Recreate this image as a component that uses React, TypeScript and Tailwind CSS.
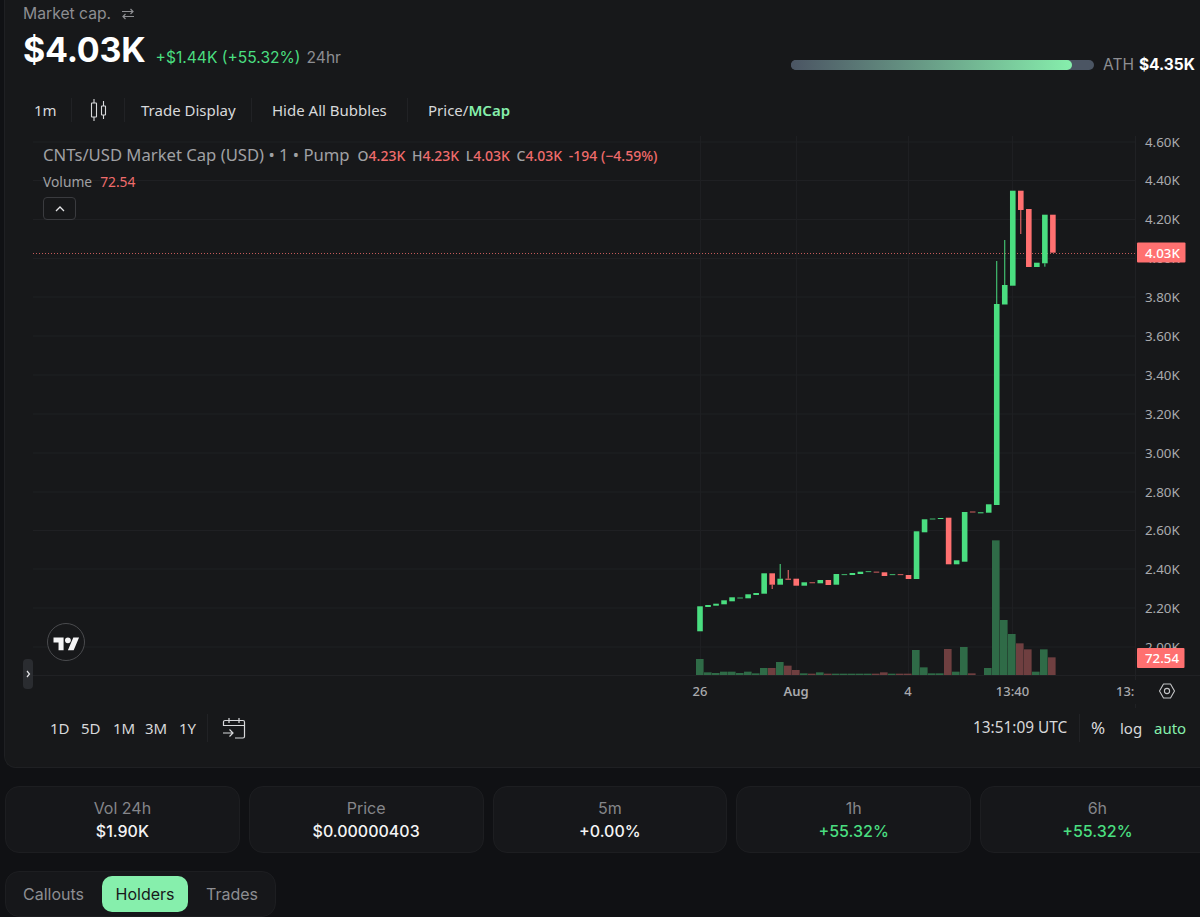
const G = "#4ade80";
const R = "#ff7070";
const VG = "#2f6b47";
const VR = "#6f3f40";

// [body top, body bottom, wick top, wick bottom, green?]
const candles: [number, number, number | null, number | null, boolean][] = [
  [606.3, 631.3, null, null, true], [605, 607, null, null, true], [603.7, 605.7, null, null, true], [600.3, 604.3, null, null, true],
  [597.3, 601.3, null, null, true], [597.6, 598.4, null, null, true], [594.3, 598.3, null, null, true], [593, 595, null, null, true],
  [573.3, 593.7, null, null, true], [573.3, 584.7, null, 589, false], [578.7, 584.7, 564, null, true], [578.7, 579.7, 570, null, false],
  [578.7, 585.7, null, null, false], [582.3, 585.7, null, null, true], [582.4, 583.2, null, null, false], [580, 583.3, null, null, true],
  [580, 585, null, null, false], [574, 584.7, null, null, true], [574.3, 575, null, null, true], [573, 575, null, null, true],
  [571.7, 574, null, null, true], [571.3, 572, null, null, true], [571.7, 572.3, null, null, false], [572.3, 576, null, null, false],
  [574.3, 575, null, null, true], [574.3, 575, null, null, false], [575, 579, null, null, false], [531.3, 579, null, null, true],
  [519.3, 532.3, null, null, true], [518.6, 519.4, null, null, true], [518, 519, null, null, true], [517.7, 564.3, null, null, false],
  [560.3, 564.3, null, null, true], [512, 561.7, null, null, true], [511.6, 512.3, null, null, false], [512.3, 513.3, null, null, true],
  [504.3, 512.7, null, null, true], [304, 505, 261, null, true], [285, 304.5, 240, null, true], [190.7, 285.7, null, null, true],
  [190.7, 210, null, 234, false], [209, 267, null, null, false], [262.7, 267, null, null, true], [214.7, 263.3, null, 266.7, true],
  [214.7, 252.7, null, null, false],
];

const volumes = [507, 547, 549, 545, 545, 549, 545, 550, 534, 534, 516, 527, 540, 550, 551, 547, 551, 551, 551, 551, 551, 551, 551, 547, 551, 551, 551, 480, 532, 550, 550, 477, 545, 471, 550, 0, 534, 151, 390, 432, 460, 478, 545, 478, 502];

const prices: [string, number][] = [
  ["4.60K", 142], ["4.40K", 180.5], ["4.20K", 219.5], ["4.00K", 258.5], ["3.80K", 297], ["3.60K", 336], ["3.40K", 375],
  ["3.20K", 414], ["3.00K", 453], ["2.80K", 492], ["2.60K", 530.5], ["2.40K", 569], ["2.20K", 608], ["2.00K", 647],
];

const stats: [string, string, boolean][] = [
  ["Vol 24h", "$1.90K", false],
  ["Price", "$0.00000403", false],
  ["5m", "+0.00%", false],
  ["1h", "+55.32%", true],
  ["6h", "+55.32%", true],
];

function Chart() {
  return (
    <svg viewBox="5 136 1195 572" className="block w-[1195px] h-[572px] font-['Noto_Sans',sans-serif]">
      {prices.map(([, y]) => (
        <line key={y} x1="33" x2="1135" y1={y} y2={y} stroke="#1f2023" strokeWidth="1" />
      ))}
      {[700.5, 796.5, 908.5, 1012.5].map((x) => (
        <line key={x} x1={x} x2={x} y1="136" y2="675" stroke="#1e1f22" strokeWidth="1" />
      ))}
      <line x1="33" x2="1200" y1="675.5" y2="675.5" stroke="#202124" />
      <line x1="1135.5" x2="1135.5" y1="136" y2="708" stroke="#202124" />
      <line x1="33" x2="1135" y1="253.5" y2="253.5" stroke="#ff7070" strokeOpacity="0.75" strokeWidth="1" strokeDasharray="1 2" />

      {volumes.map((v, i) =>
        v ? (
          <rect key={i} x={696 + i * 8} y={490 + v / 3} width="7.6" height={(555 - v) / 3} fill={candles[i][4] ? VG : VR} />
        ) : null,
      )}

      {candles.map(([t, b, wt, wb, g], i) => {
        const c = g ? G : R;
        const x = 700 + i * 8.02;
        return (
          <g key={i}>
            {wt !== null && <line x1={x} x2={x} y1={wt} y2={t} stroke={c} strokeWidth="1" />}
            {wb !== null && <line x1={x} x2={x} y1={b} y2={wb} stroke={c} strokeWidth="1" />}
            <rect x={x - 2.8} y={t} width="5.6" height={Math.max(b - t, 0.8)} fill={c} />
          </g>
        );
      })}

      {prices.map(([p, y]) => (
        <text key={p} x="1145" y={y + 4.5} fontSize="13.3" fill="#a9aaad">{p}</text>
      ))}

      <rect x="1137" y="242.5" width="48.5" height="20" rx="1" fill={R} />
      <text x="1145" y="257.5" fontSize="13.3" fontWeight="500" fill="#fff">4.03K</text>
      <rect x="1137" y="648" width="47.5" height="20" rx="1" fill={R} />
      <text x="1145" y="663" fontSize="13.3" fontWeight="500" fill="#fff">72.54</text>

      {([["26", 700], ["Aug", 796], ["4", 908], ["13:40", 1012.5]] as [string, number][]).map(([l, x]) => (
        <text key={l} x={x} y="696" fontSize="13" textAnchor="middle" fontWeight={l === "Aug" ? 600 : 500} fill="#a9aaad">{l}</text>
      ))}
      <text x="1116" y="696" fontSize="13" fontWeight="500" fill="#a9aaad">13:5</text>
      <rect x="1135" y="680" width="8" height="24" fill="#17181a" />

      <path d="M1159.500 691l4-7h7l4 7-4 7h-7z" fill="none" stroke="#c4c5c7" strokeWidth="1.100" strokeLinejoin="round" />
      <circle cx="1167" cy="691" r="2.600" fill="none" stroke="#c4c5c7" strokeWidth="1.100" />

      <circle cx="66" cy="642" r="18.500" fill="#17181a" stroke="#4a4b4e" strokeWidth="1" />
      <g transform="translate(53.500 634.500) scale(0.72)" fill="#f4f4f5">
        <path d="M14 22H7V11H0V4h14v18zM28 22h-8l7.500-18h8L28 22z" />
        <circle cx="20" cy="8" r="4" />
      </g>

      <rect x="23" y="659" width="10" height="30" rx="4" fill="#2a2c30" />
      <path d="M27 671l2.500 3-2.500 3" fill="none" stroke="#e4e4e7" strokeWidth="1.200" />
    </svg>
  );
}

export default function App() {
  return (
    <div className="w-[1200px] h-[917px] overflow-hidden bg-[#101114] font-['Inter',sans-serif]">
      <div className="ml-1 w-[1200px] h-[768px] bg-[#17181a] rounded-bl-xl border-l border-b border-[#1f2023]">
        <div className="relative h-[94px]">
          <div className="flex items-center gap-[10px] pl-[18px] pt-[3px] h-[24px] text-[15.700px] text-[#8d8e92]">
            <span>Market cap.</span>
            <svg viewBox="0 0 14 14" className="w-[14px] h-[14px]" fill="none" stroke="#8d8e92" strokeWidth="1.200">
              <path d="M1 4.500h11M9.500 2l2.500 2.500L9.500 7M13 9.500H2M4.500 7L2 9.500 4.500 12" />
            </svg>
          </div>
          <div className="flex items-baseline pl-[18px] mt-[6px]">
            <span className="text-[34px] leading-[40px] font-bold text-white tracking-[-0.2px]">$4.03K</span>
            <span className="ml-[10px] text-[15.600px] relative top-[1px] text-[#4ade80]">+$1.44K (+55.32%)</span>
            <span className="ml-[6px] text-[15.600px] relative top-[1px] text-[#8d8e92]">24hr</span>
          </div>
          <div className="absolute left-[786px] top-[53px] flex items-center">
            <div className="w-[303px] h-[10px] rounded-full bg-[#4b5563]">
              <div className="w-[281px] h-[10px] rounded-full bg-gradient-to-r from-[#4b5563] to-[#86efac]" />
            </div>
            <span className="ml-[9px] text-[15.500px] text-[#8d8e92]">ATH</span>
            <span className="ml-[5px] text-[15.500px] font-bold text-white">$4.35K</span>
          </div>
        </div>

        <div className="flex items-center h-[32px] text-[15px] text-[#d8d9db] font-['Noto_Sans',sans-serif]">
          <span className="ml-[29px] w-[37px]">1m</span>
          <span className="w-px h-[24px] bg-[#212225]" />
          <svg viewBox="0 0 18 24" className="ml-[18px] w-[18px] h-[24px]" fill="none" stroke="#d8d9db" strokeWidth="1.100">
            <path d="M4 1v4M4 19v4M13.500 3v5M13.500 17v4" />
            <rect x="1.500" y="5" width="5" height="14" rx="0.500" />
            <rect x="11.500" y="8" width="4" height="9" rx="0.500" />
          </svg>
          <span className="ml-[16px] w-px h-[24px] bg-[#212225]" />
          <span className="ml-[16px] w-[110px]">Trade Display</span>
          <span className="w-px h-[24px] bg-[#212225]" />
          <span className="ml-[20px] w-[135px]">Hide All Bubbles</span>
          <span className="w-px h-[24px] bg-[#212225]" />
          <span className="ml-[20px]">Price/<span className="font-semibold text-[#86efac]">MCap</span></span>
        </div>

        <div className="relative mt-[10px]">
          <Chart />
          <div className="absolute left-[38px] top-[8px] flex items-center h-[22px] font-['Noto_Sans',sans-serif] text-[#a0a1a4]">
            <span className="text-[16.650px]">CNTs/USD Market Cap (USD) • 1 • Pump</span>
            <span className="ml-[8px] text-[14px] font-medium text-[#f06c6c]">
              <span className="text-[#a0a1a4]">O</span>4.23K <span className="ml-[3px] text-[#a0a1a4]">H</span>4.23K <span className="ml-[3px] text-[#a0a1a4]">L</span>4.03K <span className="ml-[3px] text-[#a0a1a4]">C</span>4.03K <span className="ml-[3px]">-194 (−4.59%)</span>
            </span>
          </div>
          <div className="absolute left-[38px] top-[36px] flex items-center h-[20px] gap-[8px] text-[13.800px] font-['Noto_Sans',sans-serif]">
            <span className="text-[#a0a1a4]">Volume</span>
            <span className="text-[#f06c6c]">72.54</span>
          </div>
          <div className="absolute left-[38px] top-[61px] w-[33px] h-[23px] rounded-[4px] border border-[#3a3b3f] bg-[#17181a] flex items-center justify-center">
            <svg viewBox="0 0 10 6" className="w-[10px] h-[6px]" fill="none" stroke="#e4e4e7" strokeWidth="1.300">
              <path d="M1 5l4-4 4 4" />
            </svg>
          </div>
        </div>

        <div className="relative flex items-center h-[40px] text-[15px] text-[#d8d9db] font-['Noto_Sans',sans-serif]">
          <div className="flex ml-[45px] gap-[13px] w-[157px]">
            <span className="w-[18px]">1D</span>
            <span className="w-[19px]">5D</span>
            <span className="w-[19px]">1M</span>
            <span className="w-[21px]">3M</span>
            <span>1Y</span>
          </div>
          <span className="w-px h-[28px] bg-[#212225]" />
          <svg viewBox="0 0 24 22" className="ml-[14px] w-[24px] h-[22px]" fill="none" stroke="#d8d9db" strokeWidth="1.200">
            <path d="M1.500 9V5a1.500 1.500 0 0 1 1.500-1.500h18A1.500 1.500 0 0 1 22.500 5v14.500a1.500 1.500 0 0 1-1.500 1.500h-8M1.500 8.500h21M7 1v5M17 1v5M1 16h10M7.500 12.500L11 16l-3.500 3.500" />
          </svg>
          <div className="absolute left-[968px] top-0 h-[40px] flex items-center">
            <span className="w-[106px] text-[15.400px]">13:51:09 UTC</span>
            <span className="w-px h-[28px] bg-[#212225]" />
            <span className="ml-[11px] w-[29px] text-[17px]">%</span>
            <span className="w-[34px]">log</span>
            <span className="text-[#86efac]">auto</span>
          </div>
        </div>
      </div>

      <div className="flex gap-[9px] pl-[5px] mt-[18px] w-[1300px]">
        {stats.map(([label, value, up]) => (
          <div key={label} className="w-[234.750px] h-[67px] rounded-[14px] border border-[#1d1e21] bg-[#16171a] flex flex-col items-center justify-center">
            <span className="text-[16px] leading-[23px] text-[#85868a]">{label}</span>
            <span className={`text-[16px] leading-[23px] font-medium ${up ? "text-[#4ade80]" : "text-[#f4f4f5]"}`}>{value}</span>
          </div>
        ))}
      </div>

      <div className="ml-[5px] mt-[18px] w-[271px] h-[46px] rounded-[14px] border border-[#1d1e21] bg-[#16171a] flex items-center text-[16px] text-[#8d8e92]">
        <span className="ml-[17px] w-[79px]">Callouts</span>
        <span className="w-[86px] h-[36px] rounded-[10px] bg-[#86efac] text-[#17181a] flex items-center justify-center">Holders</span>
        <span className="ml-[18px]">Trades</span>
      </div>
    </div>
  );
}
